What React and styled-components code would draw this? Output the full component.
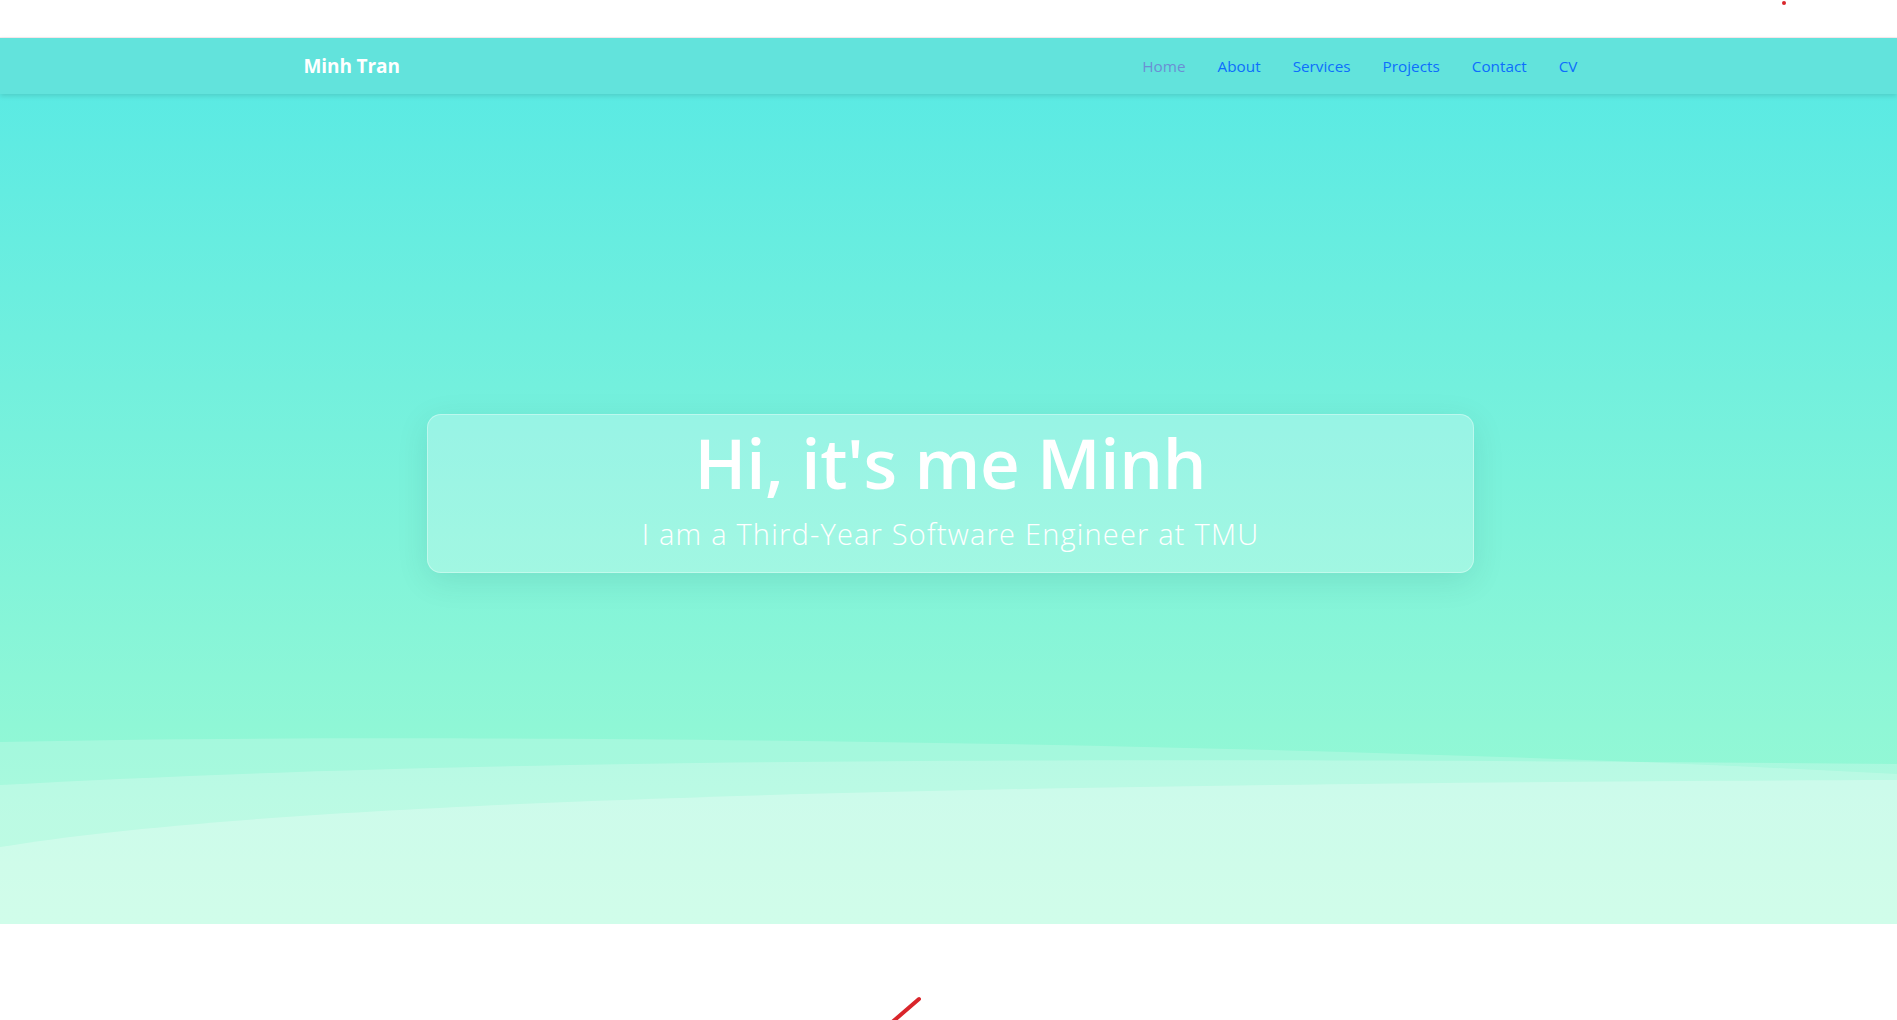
import React from "react";
import styled, { createGlobalStyle } from "styled-components";

const GlobalStyle = createGlobalStyle`
  html, body { margin: 0; padding: 0; background: #ffffff; }
  body { font-family: "Open Sans", "Noto Sans", sans-serif; overflow: hidden; }
  * { box-sizing: border-box; }
`;

const Page = styled.div`
  display: flex;
  flex-direction: column;
  min-height: 1020px;
`;

const TopStrip = styled.div`
  position: relative;
  height: 38px;
  background: #ffffff;
  border-bottom: 1px solid #fbeaee;
`;

const Mark = styled.svg`
  position: absolute;
  left: ${(p) => p.$x}px;
  top: ${(p) => p.$y}px;
  overflow: visible;
`;

const Navbar = styled.nav`
  position: relative;
  z-index: 2;
  height: 56px;
  background: #62e3dc;
  box-shadow: 0 2px 5px rgba(0, 0, 0, 0.12);
`;

const NavInner = styled.div`
  max-width: 1320px;
  height: 100%;
  margin: 0 auto;
  padding: 0 15px;
  display: flex;
  align-items: center;
  justify-content: space-between;
`;

const Brand = styled.a`
  font-size: 19px;
  font-weight: 700;
  color: #ffffff;
  text-decoration: none;
  letter-spacing: -0.1px;
`;

const NavList = styled.ul`
  display: flex;
  list-style: none;
  margin: 0;
  padding: 0;
`;

const NavLink = styled.a`
  display: block;
  padding: 8px 16px;
  font-size: 15.3px;
  font-weight: 500;
  color: ${(p) => (p.$active ? "#6b8fd4" : "#0d6efd")};
  text-decoration: none;
`;

const Hero = styled.section`
  position: relative;
  height: 830px;
  background: linear-gradient(180deg, #5beae3 0%, #8ff7d6 76%, #9cfad3 100%);
  display: flex;
  align-items: center;
  justify-content: center;
  padding-bottom: 31px;
  overflow: hidden;
`;

const Card = styled.div`
  position: relative;
  z-index: 1;
  width: 1047px;
  height: 159px;
  margin-left: 4px;
  border-radius: 14px;
  background: rgba(255, 255, 255, 0.25);
  border: 1px solid rgba(255, 255, 255, 0.35);
  box-shadow: 0 8px 32px rgba(0, 60, 60, 0.1);
  display: flex;
  flex-direction: column;
  align-items: center;
  padding-top: 3px;
`;

const Title = styled.h1`
  margin: 0;
  font-size: 69px;
  line-height: 88px;
  font-weight: 600;
  color: #ffffff;
  letter-spacing: -0.3px;
`;

const Subtitle = styled.p`
  margin: 8px 0 0;
  font-size: 29px;
  line-height: 40px;
  font-weight: 300;
  color: #ffffff;
  letter-spacing: 1.2px;
`;

const Waves = styled.svg`
  position: absolute;
  left: 0;
  bottom: 0;
  width: 100%;
  height: 190px;
`;

const Below = styled.section`
  position: relative;
  height: 200px;
  background: #ffffff;
`;

export default function App() {
  const links = ["Home", "About", "Services", "Projects", "Contact", "CV"];
  return (
    <Page>
      <GlobalStyle />
      <TopStrip>
        <Mark $x={1782} $y={1} width="4" height="4">
          <circle cx="2" cy="2" r="2" fill="#d9252b" />
        </Mark>
      </TopStrip>
      <Navbar>
        <NavInner>
          <Brand href="#">Minh Tran</Brand>
          <NavList>
            {links.map((l, i) => (
              <li key={l}>
                <NavLink href="#" $active={i === 0}>
                  {l}
                </NavLink>
              </li>
            ))}
          </NavList>
        </NavInner>
      </Navbar>
      <Hero>
        <Card>
          <Title>Hi, it's me Minh</Title>
          <Subtitle>I am a Third-Year Software Engineer at TMU</Subtitle>
        </Card>
        <Waves viewBox="0 0 1897 190" preserveAspectRatio="none">
          <path d="M0 8 C 450 -2, 1300 8, 1897 40 L1897 190 L0 190 Z" fill="#ffffff" fillOpacity="0.19" />
          <path d="M0 51 C 450 26, 1000 22, 1897 30 L1897 190 L0 190 Z" fill="#ffffff" fillOpacity="0.22" />
          <path d="M0 113 C 250 72, 800 50, 1897 46 L1897 190 L0 190 Z" fill="#ffffff" fillOpacity="0.27" />
        </Waves>
      </Hero>
      <Below>
        <Mark $x={880} $y={70} width="50" height="40">
          <line x1="39" y1="5" x2="10" y2="30" stroke="#d9252b" strokeWidth="4" strokeLinecap="round" />
        </Mark>
      </Below>
    </Page>
  );
}
